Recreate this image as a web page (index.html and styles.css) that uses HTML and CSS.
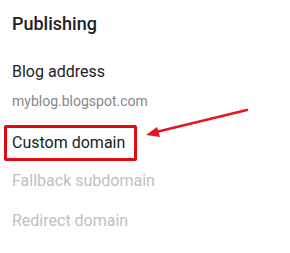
FILE: index.html
```html
<!DOCTYPE html>
<html lang="en">
<head>
    <meta charset="UTF-8">
    <meta name="viewport" content="width=device-width, initial-scale=1.0">
    <title>Publishing</title>
    <link rel="stylesheet" href="styles.css">
</head>
<body>
    <div class="settings">
        <h2 class="section-title">Publishing</h2>
        <div class="item">
            <div class="item-label">Blog address</div>
            <div class="item-value">myblog.blogspot.com</div>
        </div>
        <div class="item highlight">
            <div class="item-label">Custom domain</div>
        </div>
        <div class="item disabled">
            <div class="item-label">Fallback subdomain</div>
        </div>
        <div class="item disabled">
            <div class="item-label">Redirect domain</div>
        </div>
        <svg class="arrow" width="290" height="253" viewBox="0 0 290 253">
            <line x1="247" y1="110" x2="156" y2="132" stroke="#e8161b" stroke-width="2.5" stroke-linecap="round"/>
            <polygon points="146,135 157,127 160,137" fill="#e8161b"/>
        </svg>
    </div>
</body>
</html>
```

FILE: styles.css
```css
* {
    margin: 0;
    padding: 0;
    box-sizing: border-box;
}
body {
    background: #fff;
    font-family: Roboto, "Liberation Sans", Arial, sans-serif;
}
.settings {
    position: relative;
    width: 290px;
    height: 253px;
    padding: 13px 0 0 12px;
}
.section-title {
    font-size: 18px;
    font-weight: 500;
    color: #202124;
    line-height: 22px;
    margin-bottom: 27px;
}
.item {
    line-height: 20px;
    margin-bottom: 20px;
}
.item-label {
    font-size: 16px;
    color: #202124;
}
.item-value {
    font-size: 14px;
    color: #86888b;
    margin-top: 9px;
}
.highlight {
    margin-left: -8px;
    width: 133px;
    padding: 5px 0 5px 5px;
    border: 3px solid #e00b12;
    border-radius: 2px;
    margin-top: -6px;
    margin-bottom: 10px;
}
.disabled .item-label {
    color: #bdc1c6;
}
.arrow {
    position: absolute;
    left: 0;
    top: 0;
    pointer-events: none;
}
```
